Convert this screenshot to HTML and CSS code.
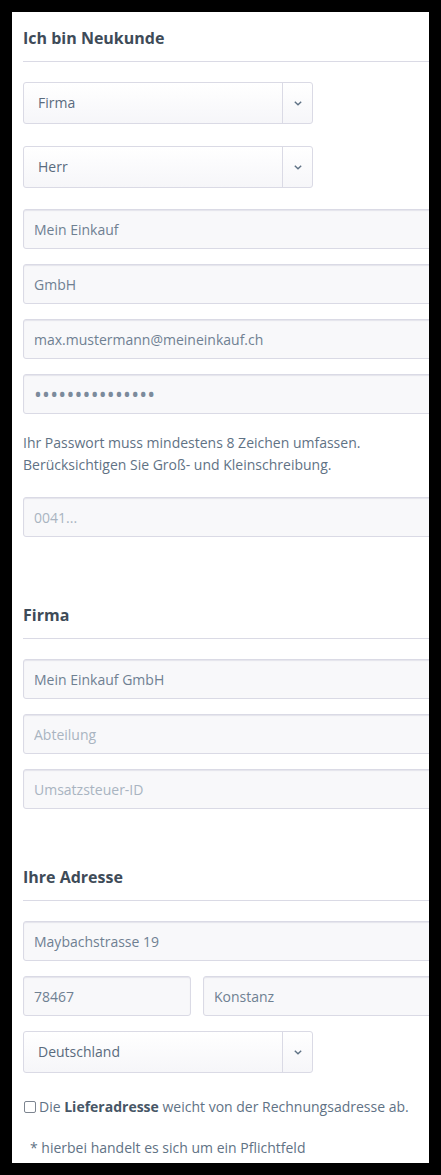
FILE: index.html
```html
<!DOCTYPE html>
<html lang="de">
<head>
<meta charset="utf-8">
<title>Registrierung</title>
<link rel="stylesheet" href="styles.css">
</head>
<body>
<div class="panel">
  <form class="form">
    <h2 class="title">Ich bin Neukunde</h2>

    <div class="select-field sel-1">
      <span class="select-value">Firma</span>
      <span class="select-arrow"><svg width="8" height="5" viewBox="0 0 8 5"><polyline points="0.8,0.8 4,3.8 7.2,0.8" fill="none" stroke="#5f7285" stroke-width="1.4"/></svg></span>
    </div>
    <div class="select-field sel-2">
      <span class="select-value">Herr</span>
      <span class="select-arrow"><svg width="8" height="5" viewBox="0 0 8 5"><polyline points="0.8,0.8 4,3.8 7.2,0.8" fill="none" stroke="#5f7285" stroke-width="1.4"/></svg></span>
    </div>

    <input class="field" type="text" value="Mein Einkauf">
    <input class="field" type="text" value="GmbH">
    <input class="field" type="text" value="max.mustermann@meineinkauf.ch">
    <input class="field field-pw" type="password" value="passwort1234567">

    <p class="help">Ihr Passwort muss mindestens 8 Zeichen umfassen.<br>Berücksichtigen Sie Groß- und Kleinschreibung.</p>

    <input class="field field-last" type="text" placeholder="0041...">

    <h2 class="title title-2">Firma</h2>
    <input class="field" type="text" value="Mein Einkauf GmbH">
    <input class="field" type="text" placeholder="Abteilung">
    <input class="field field-last2" type="text" placeholder="Umsatzsteuer-ID">

    <h2 class="title title-2">Ihre Adresse</h2>
    <input class="field" type="text" value="Maybachstrasse 19">
    <div class="row">
      <input class="field field-zip" type="text" value="78467">
      <input class="field field-city" type="text" value="Konstanz">
    </div>
    <div class="select-field sel-3">
      <span class="select-value">Deutschland</span>
      <span class="select-arrow"><svg width="8" height="5" viewBox="0 0 8 5"><polyline points="0.8,0.8 4,3.8 7.2,0.8" fill="none" stroke="#5f7285" stroke-width="1.4"/></svg></span>
    </div>

    <label class="check">
      <input class="check-box" type="checkbox">
      <span>Die <strong>Lieferadresse</strong> weicht von der Rechnungsadresse ab.</span>
    </label>

    <p class="note">* hierbei handelt es sich um ein Pflichtfeld</p>
  </form>
</div>
</body>
</html>
```

FILE: styles.css
```css
html, body {
  margin: 0;
  padding: 0;
  background: #000;
}

body {
  font-family: "Open Sans", "Liberation Sans", sans-serif;
  font-size: 14px;
  color: #5f7285;
}

.panel {
  margin: 12px;
  width: 417px;
  height: 1151px;
  background: #fff;
  overflow: hidden;
}

.form {
  display: flex;
  flex-direction: column;
  align-items: flex-start;
  width: 500px;
  padding: 14px 0 0 11px;
  margin: 0;
}

.title {
  align-self: stretch;
  margin: 0 0 20px;
  padding: 0 0 11px;
  font-size: 16px;
  line-height: 24px;
  font-weight: 700;
  color: #3e4b58;
  border-bottom: 1px solid #dadae5;
}

.title-2 {
  margin-top: 66px;
}

.select-field {
  box-sizing: border-box;
  display: flex;
  align-items: center;
  width: 290px;
  height: 42px;
  border: 1px solid #dadae5;
  border-radius: 3px;
  background: linear-gradient(to bottom, #ffffff 0%, #f6f6f9 100%);
}

.sel-1 { margin-bottom: 22px; }
.sel-2 { margin-bottom: 21px; }
.sel-3 { margin-bottom: 23px; }

.select-value {
  flex: 1;
  padding-left: 14px;
  color: #5a6b7e;
  line-height: 40px;
}

.select-arrow {
  width: 29px;
  height: 40px;
  border-left: 1px solid #dadae5;
  display: flex;
  align-items: center;
  justify-content: center;
}

.select-arrow svg {
  display: block;
  margin-left: 1px;
}

.field {
  box-sizing: border-box;
  align-self: stretch;
  height: 40px;
  margin: 0 0 15px;
  padding: 0 10px;
  border: 1px solid #dadae5;
  border-radius: 3px;
  background: #f8f8fa;
  box-shadow: inset 0 1px 1px #e4e4ec;
  font-family: "Open Sans", "Liberation Sans", sans-serif;
  font-size: 14px;
  color: #6f8092;
  outline: none;
}

.field::placeholder {
  color: #a9b4c1;
  opacity: 1;
}

.field-pw {
  margin-bottom: 18px;
  padding-left: 10px;
  font-size: 21px;
  letter-spacing: 0.2px;
  color: #7c8b9c;
}

.field-last {
  margin-bottom: 0;
}

.field-last2 {
  margin-bottom: 0;
}

.field-last2 + .title-2 {
  margin-top: 56px;
}

.help {
  margin: 0 0 21px;
  line-height: 22px;
  color: #5f7285;
}

.row {
  align-self: stretch;
  display: flex;
  gap: 12px;
  margin-bottom: 15px;
}

.row .field {
  margin: 0;
}

.field-zip {
  flex: 0 0 168px;
  width: 168px;
}

.field-city {
  flex: 1;
  min-width: 0;
}

.check {
  display: flex;
  align-items: center;
  line-height: 22px;
  margin: 0 0 19px 1px;
  color: #5f7285;
}

.check strong {
  color: #475666;
  font-weight: 700;
}

.check-box {
  appearance: none;
  -webkit-appearance: none;
  box-sizing: border-box;
  width: 12px;
  height: 12px;
  margin: 0 3px 0 0;
  border: 1px solid #7d8590;
  border-radius: 2px;
  background: #fff;
}

.note {
  margin: 0;
  padding-left: 7px;
  line-height: 22px;
  color: #5f7285;
}
```
